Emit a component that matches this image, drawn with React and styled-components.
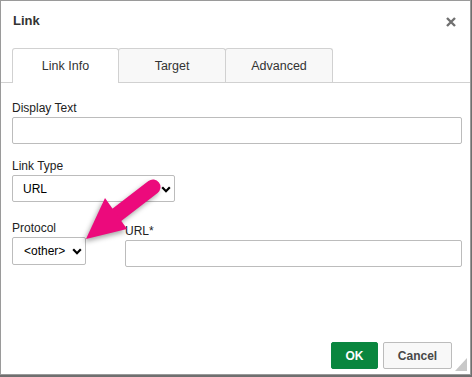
import React from 'react';
import styled, { createGlobalStyle } from 'styled-components';

const Global = createGlobalStyle`
    html, body {
        margin: 0;
        padding: 0;
        background: #6f6f6f;
    }
    body {
        font-family: "Liberation Sans", Arial, sans-serif;
        font-size: 12px;
        color: #222;
    }
`;

/* ------------------------------------------------------------- Dialog --- */

const Dialog = styled.div`
    position: relative;
    width: 471px;
    height: 375px;
    box-sizing: border-box;
    border: 1px solid #9a9a9a;
    background: #fff;
    display: flex;
    flex-direction: column;
`;

const TitleBar = styled.div`
    height: 39px;
    padding: 0 14px 0 12px;
    display: flex;
    align-items: center;
    justify-content: space-between;

    h1 {
        margin: 0;
        font-size: 13px;
        font-weight: bold;
        color: #333;
    }
`;

const Close = styled.button`
    border: 0;
    background: none;
    padding: 0;
    margin-top: 2px;
    width: 10px;
    height: 10px;
    display: flex;
    cursor: pointer;
`;

/* --------------------------------------------------------------- Tabs --- */

const TabRow = styled.div`
    margin-top: 8px;
    padding-left: 11px;
    display: flex;
    align-items: flex-end;
    border-bottom: 1px solid #d1d1d1;
`;

const Tab = styled.div`
    width: ${props => props.width}px;
    height: ${props => (props.active ? 35 : 34)}px;
    margin-bottom: ${props => (props.active ? -1 : 0)}px;
    margin-left: ${props => (props.first ? 0 : -1)}px;
    box-sizing: border-box;
    border: 1px solid #d1d1d1;
    border-bottom: 0;
    border-radius: 3px 3px 0 0;
    background: ${props => (props.active ? '#fff' : '#f8f8f8')};
    display: flex;
    align-items: center;
    justify-content: center;
    padding-bottom: ${props => (props.active ? 1 : 0)}px;
    font-size: 12.5px;
    color: #333;
`;

/* --------------------------------------------------------------- Form --- */

const Body = styled.div`
    padding: 18px 8px 0 11px;
    display: flex;
    flex-direction: column;
`;

const Field = styled.div`
    display: flex;
    flex-direction: column;
    margin-top: ${props => props.top || 0}px;
    width: ${props => (props.width ? `${props.width}px` : 'auto')};
    flex: ${props => (props.grow ? 1 : 'none')};
`;

const Label = styled.label`
    font-size: 12px;
    line-height: 14px;
    color: #222;
    margin-bottom: 2px;
`;

const TextInput = styled.input`
    height: 27px;
    box-sizing: border-box;
    border: 1px solid #bcbcbc;
    border-radius: 2px;
    padding: 0 8px;
    font: inherit;
    outline: none;
`;

const SelectWrap = styled.div`
    position: relative;
    width: ${props => props.width}px;
    height: ${props => props.height || 27}px;

    svg {
        position: absolute;
        right: 4px;
        top: 50%;
        margin-top: -3px;
        pointer-events: none;
    }
`;

const Select = styled.select`
    appearance: none;
    -webkit-appearance: none;
    width: 100%;
    height: 100%;
    box-sizing: border-box;
    border: 1px solid #bcbcbc;
    border-radius: 2px;
    background: #fff;
    padding: 0 0 0 ${props => props.pad || 10}px;
    font-family: "Liberation Sans", Arial, sans-serif;
    font-size: 12px;
    color: #000;
    outline: none;
`;

const Row = styled.div`
    display: flex;
    align-items: flex-start;
    gap: 39px;
    margin-top: 19px;
`;

/* ------------------------------------------------------------- Footer --- */

const Footer = styled.div`
    margin-top: auto;
    padding: 0 18px 5px 0;
    display: flex;
    justify-content: flex-end;
    gap: 5px;
`;

const Button = styled.button`
    height: 27px;
    width: ${props => props.width}px;
    box-sizing: border-box;
    border: 1px solid ${props => (props.primary ? '#0a8642' : '#bcbcbc')};
    border-radius: 2px;
    background: ${props => (props.primary ? '#09863e' : '#f8f8f8')};
    color: ${props => (props.primary ? '#fff' : '#484848')};
    font-family: "Liberation Sans", Arial, sans-serif;
    font-size: 12px;
    font-weight: bold;
    padding: 0;
    cursor: pointer;
`;

const Grip = styled.div`
    position: absolute;
    right: 3px;
    bottom: 3px;
    width: 0;
    height: 0;
    border-style: solid;
    border-width: 0 0 13px 12px;
    border-color: transparent transparent #c8c8c8 transparent;
`;

const Pointer = styled.svg`
    position: absolute;
    left: 0;
    top: 0;
    pointer-events: none;
    filter: drop-shadow(-2px 3px 2.5px rgba(0, 0, 0, 0.35));
`;

const Chevron = () => (
    <svg width="10" height="7" viewBox="0 0 10 7">
        <path d="M1.2 1.3 L5 5.2 L8.8 1.3" fill="none" stroke="#000" strokeWidth="2.2" />
    </svg>
);

export default function App() {
    return (
        <>
            <Global />
            <Dialog>
                <TitleBar>
                    <h1>Link</h1>
                    <Close aria-label="Close">
                        <svg width="10" height="10" viewBox="0 0 10 10">
                            <path d="M1 1 L9 9 M9 1 L1 9" stroke="#707070" strokeWidth="2.4" />
                        </svg>
                    </Close>
                </TitleBar>

                <TabRow>
                    <Tab first active width={107}>Link Info</Tab>
                    <Tab width={108}>Target</Tab>
                    <Tab width={108}>Advanced</Tab>
                </TabRow>

                <Body>
                    <Field>
                        <Label>Display Text</Label>
                        <TextInput />
                    </Field>

                    <Field top={15}>
                        <Label>Link Type</Label>
                        <SelectWrap width={163}>
                            <Select pad={10}>
                                <option>URL</option>
                            </Select>
                            <Chevron />
                        </SelectWrap>
                    </Field>

                    <Row>
                        <Field width={74}>
                            <Label>Protocol</Label>
                            <SelectWrap width={74} height={28}>
                                <Select pad={11}>
                                    <option>&lt;other&gt;</option>
                                </Select>
                                <Chevron />
                            </SelectWrap>
                        </Field>
                        <Field grow top={3}>
                            <Label>URL*</Label>
                            <TextInput />
                        </Field>
                    </Row>
                </Body>

                <Footer>
                    <Button primary width={47}>OK</Button>
                    <Button width={69}>Cancel</Button>
                </Footer>
                <Grip />

                <Pointer width="471" height="375" viewBox="0 0 471 375">
                    <line x1="152" y1="186" x2="113" y2="216" stroke="#ec0a7c" strokeWidth="15" strokeLinecap="round" />
                    <polygon points="85,238 104,197 126,228" fill="#ec0a7c" />
                </Pointer>
            </Dialog>
        </>
    );
}
